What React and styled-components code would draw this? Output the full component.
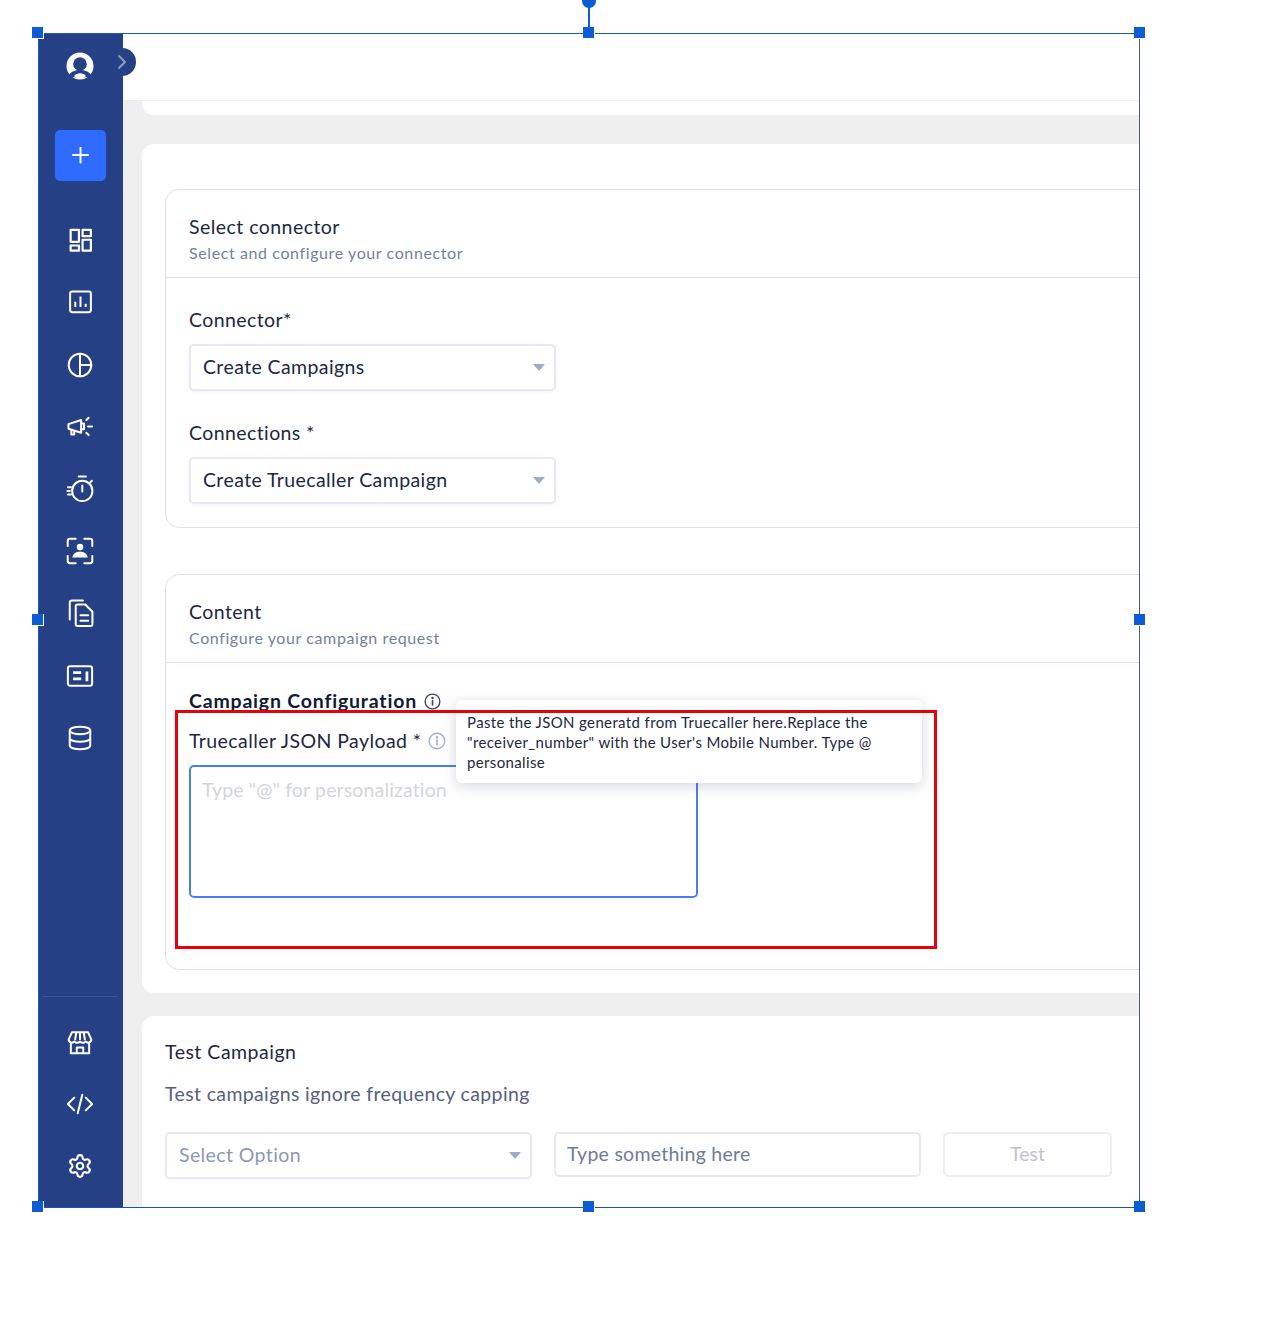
import React from "react";
import styled, { createGlobalStyle } from "styled-components";
import { Settings } from "lucide-react";

const Global = createGlobalStyle`
  html, body { margin: 0; padding: 0; background: #fff; }
  body { font-family: "Lato", "Liberation Sans", sans-serif; color: #1d2742; }
  * { box-sizing: border-box; }
`;
const Page = styled.div`
  position: relative; width: 1278px; height: 1332px; padding: 33px 0 0 38px; overflow: hidden; background: #fff;
`;
const Frame = styled.div`
  display: flex; width: 1101px; height: 1174px; overflow: hidden; background: #efefef;
`;
const Sidebar = styled.aside`
  flex: 0 0 85px; display: flex; flex-direction: column; align-items: center; background: #254085; padding-top: 19px;
`;
const Avatar = styled.div`width: 28px; height: 28px; margin-right: 2px; line-height: 0;`;
const AddButton = styled.div`
  width: 51px; height: 51px; margin-top: 50px; border-radius: 5px; background: #2f6bff;
  display: flex; align-items: center; justify-content: center; color: #fff;
`;
const NavGroup = styled.nav`
  display: flex; flex-direction: column; gap: ${p => p.$gap}px; margin-top: ${p => p.$top}px;
`;
const NavIcon = styled.div`
  width: 40px; height: 40px; margin-right: 1px; display: flex; align-items: center; justify-content: center; color: #fff;
`;
const SideRule = styled.div`width: 75px; height: 1px; margin-top: auto; background: #3d558f;`;
const SideFoot = styled.div`height: 21px; flex: none;`;
const Toggle = styled.div`
  position: absolute; left: 108px; top: 48px; width: 28px; height: 28px; border-radius: 50%;
  background: #254085; display: flex; align-items: center; justify-content: center;
  color: #8d9bbd;
`;
const Main = styled.main`flex: 1; min-width: 0; display: flex; flex-direction: column;`;
const TopBar = styled.header`height: 68px; flex: none; background: #fff; border-bottom: 1px solid #e8ecf8;`;
const Stack = styled.div`flex: 1; min-height: 0; padding-left: 19px; display: flex; flex-direction: column;`;
const CardTail = styled.div`height: 14px; flex: none; width: 1100px; background: #fff; border-radius: 0 0 0 12px;`;
const Card = styled.section`
  flex: ${p => p.$grow ? "1" : "none"}; width: 1100px; background: #fff;
  border-radius: ${p => p.$grow ? "12px 0 0 0" : "12px 0 0 12px"};
  margin-top: ${p => p.$top}px; padding: ${p => p.$pad};
`;
const Panel = styled.div`
  width: 1100px; border: 1px solid #dce1f0; border-radius: 14px; margin-top: ${p => p.$top || 0}px;
`;
const PanelHead = styled.div`height: 88px; padding: 24px 23px 0; border-bottom: 1px solid #dce1f0;`;
const PanelTitle = styled.div`font-size: 19.5px; line-height: 26px; color: #1d2742; letter-spacing: .45px;`;
const PanelSub = styled.div`font-size: 16px; line-height: 24px; color: #74809f; margin-top: 1px; letter-spacing: .6px;`;
const PanelBody = styled.div`padding: ${p => p.$pad};`;
const FieldLabel = styled.div`font-size: 19.5px; line-height: 26px; color: #1d2742; letter-spacing: .4px; margin-top: ${p => p.$top || 0}px;`;
const SelectBox = styled.div`
  width: ${p => p.$w}px; height: 47px; margin-top: ${p => p.$top || 0}px; padding: 0 9px 2px 12px;
  border: 2px solid #e6e9f5; border-radius: 5px; background: #fff;
  box-shadow: 0 1px 3px rgba(30,50,110,.06);
  display: flex; align-items: center; justify-content: space-between;
  font-size: 19.5px; letter-spacing: .4px; color: ${p => p.$muted ? "#8c97b5" : "#1d2742"};
`;
const Caret = styled.span`
  width: 0; height: 0; border-left: 6.5px solid transparent; border-right: 6.5px solid transparent;
  border-top: 7px solid #9eaac8; margin-top: 2px;
`;
const SectionTitle = styled.div`
  display: flex; align-items: center; gap: 7px; font-size: 19.5px; line-height: 26px; font-weight: 700;
  letter-spacing: .8px; color: #111a33;
`;
const FieldRow = styled.div`
  display: flex; align-items: center; gap: 6px; margin-top: 14px;
  font-size: 19.5px; line-height: 26px; letter-spacing: .42px; color: #1d2742;
`;
const InfoIcon = styled.span`display: flex; color: ${p => p.$c};`;
const TextArea = styled.div`
  width: 509px; height: 133px; margin-top: 11px; border: 2px solid #4a7df5; border-radius: 5px;
  padding: 10px 11px; font-size: 19.5px; line-height: 26px; letter-spacing: .15px; color: #d3d5da;
`;
const TestTitle = styled.div`font-size: 19.5px; line-height: 26px; letter-spacing: .5px; color: #1d2742;`;
const TestSub = styled.div`font-size: 19.5px; line-height: 26px; letter-spacing: .36px; color: #56607c; margin-top: 16px;`;
const TestRow = styled.div`display: flex; align-items: flex-start; gap: 22px; margin-top: 25px;`;
const InputBox = styled.div`
  width: 367px; height: 45px; border: 2px solid #e6e9f5; border-radius: 5px; padding: 0 11px 2px;
  display: flex; align-items: center; font-size: 19.5px; letter-spacing: .26px; color: #6f7a98;
`;
const TestButton = styled.div`
  width: 169px; height: 45px; border: 2px solid #eceef3; border-radius: 5px; padding-bottom: 2px;
  display: flex; align-items: center; justify-content: center; font-size: 19.5px; color: #c0c3ca;
`;
const Tooltip = styled.div`
  position: absolute; left: 456px; top: 700px; width: 466px; height: 83px; padding: 12px 11px;
  background: #fff; border-radius: 6px; box-shadow: 0 3px 14px rgba(40,50,90,.2);
  font-size: 15px; line-height: 20px; letter-spacing: .36px; color: #1d2742;
`;
const RedBox = styled.div`
  position: absolute; left: 175px; top: 710px; width: 762px; height: 239px; border: 3px solid #e8000b;
`;
const FrameLine = styled.div`
  position: absolute; left: 38px; top: 33px; width: 1102px; height: 1175px; pointer-events: none;
  border: 1px solid #1557bd; border-right-color: #4a5a80;
`;
const Handle = styled.div`
  position: absolute; left: ${p => p.$x - 6}px; top: ${p => p.$y - 6}px; width: 12px; height: 12px;
  background: #0b5cd5; border-right: 1px solid #fff; border-bottom: 1px solid #fff;
`;
const Stem = styled.div`position: absolute; left: 588px; top: 2px; width: 2px; height: 31px; background: #0b5cd5;`;
const Knob = styled.div`
  position: absolute; left: 582px; top: -6px; width: 14px; height: 14px; border-radius: 50%; background: #0b5cd5;
`;

const S = ({ children, size = 26, sw = 2 }) => (
  <svg width={size} height={size} viewBox="0 0 26 26" fill="none" stroke="currentColor" strokeWidth={sw * 26 / size}
    strokeLinecap="round" strokeLinejoin="round">{children}</svg>
);
const icons = [
  <S sw={2.2} size={27}><g transform="translate(0 -.7)"><rect x="3.500" y="3.500" width="8" height="11.500" /><rect x="15" y="3.500" width="8" height="6" /><rect x="3.500" y="18.500" width="8" height="5" /><rect x="15" y="13" width="8" height="10.500" /></g></S>,
  <S size={27}><g transform="translate(0 -.7)"><rect x="3" y="3" width="20" height="20" rx="2" /><path d="M8 18v-5M13 18V8M18 18v-3" strokeLinecap="butt" /></g></S>,
  <S size={28}><circle cx="13" cy="13" r="10.500" /><path d="M13 2.500v21M13 13h10.500" /></S>,
  <S size={30}><path d="M3 10.500l11-3.500v11L3 14.500z" /><path d="M5.500 15.500v4h2.500v-3.300" /><path d="M14 10h2.500v5H14" /><path d="M18.500 7l2-2M20 12.500h3.500M18.500 18l2 2" /></S>,
  <S size={31}><g transform="translate(0 -.8)"><circle cx="14.500" cy="15" r="8.500" /><path d="M11.500 3h6M14.500 10.500v5M21 8l1.500-1.500M2.500 12h2.500M2 15h2M2.500 18h2.500" /></g></S>,
  <S size={32}><path d="M3 9V5a2 2 0 0 1 2-2h4.500M16.500 3H21a2 2 0 0 1 2 2v4M23 17v4a2 2 0 0 1-2 2h-4.500M9.500 23H5a2 2 0 0 1-2-2v-4" /><circle cx="13" cy="9.800" r="2.700" fill="currentColor" stroke="none" /><path d="M6.800 18.300c.5-3.200 2.800-4.600 6.200-4.600s5.700 1.400 6.200 4.600z" fill="currentColor" stroke="none" /></S>,
  <S size={31}><path d="M4 18V4a2 2 0 0 1 2-2h9" /><path d="M9 7a1.500 1.500 0 0 1 1.500-1.500h6.500l6 6v10.500a1.500 1.500 0 0 1-1.500 1.500h-11a1.500 1.500 0 0 1-1.500-1.500z" /><path d="M13 14.500h6.500M13 19h6.500" /></S>,
  <S size={30}><rect x="2.500" y="4.500" width="21" height="17" rx="2" /><path d="M7 10h7M7 15.500h7M19 9v8.500" strokeWidth="2.400" strokeLinecap="butt" /></S>,
  <S size={28}><ellipse cx="13" cy="6" rx="9.500" ry="3.500" /><path d="M3.500 6v14c0 2 4.300 3.500 9.500 3.500s9.500-1.500 9.500-3.500V6M3.500 13c0 2 4.300 3.500 9.500 3.500s9.500-1.500 9.500-3.500" /></S>,
];
const bottomIcons = [
  <S size={28}><g transform="translate(0 1)"><path d="M5.500 3h15l3 6.500a3 3 0 0 1-5.300 2 3.500 3.500 0 0 1-5.200 0 3.500 3.500 0 0 1-5.200 0 3 3 0 0 1-5.300-2z" /><path d="M4.500 13v9.500h17V13M10 22.500V17h6v5.500M9.500 3.500L8.500 9.500M13 3.500v6M16.500 3.500l1 6" /></g></S>,
  <S size={30}><path d="M8 7.500L2.500 13 8 18.500M18 7.500l5.500 5.500-5.500 5.500M15 5l-4 16" /></S>,
  <Settings size={26} strokeWidth={2} />,
];
const Info = ({ size }) => (
  <svg width={size} height={size} viewBox="0 0 18 18" fill="none" stroke="currentColor" strokeWidth="1.400" strokeLinecap="round">
    <circle cx="9" cy="9" r="7.800" /><path d="M9 8.200v4.500" strokeWidth="1.700" /><circle cx="9" cy="5.400" r=".6" />
  </svg>
);

export default function App() {
  const handles = [[38, 33], [589, 33], [1140, 33], [38, 620], [1140, 620], [38, 1207], [589, 1207], [1140, 1207]];
  return (
    <Page>
      <Global />
      <Frame>
        <Sidebar>
          <Avatar>
            <svg width="28" height="28" viewBox="0 0 28 28">
              <circle cx="14" cy="14" r="13.500" fill="#fff" />
              <circle cx="14" cy="12" r="6.800" fill="#254085" />
              <path d="M3 23c2-3.500 6-5 11-5s9 1.500 11 5l-3 2.300H6z" fill="#254085" />
              <path d="M8 24c1.500-2 3.500-2.800 6-2.800s4.500.8 6 2.800c-1.800 1.800-3.800 3-6 3s-4.200-1.200-6-3z" fill="#fff" />
            </svg>
          </Avatar>
          <AddButton>
            <svg width="18" height="18" viewBox="0 0 18 18" stroke="currentColor" strokeWidth="2" strokeLinecap="round"><path d="M8.500 .5v15M1 8h15" /></svg>
          </AddButton>
          <NavGroup $top={39} $gap={22.25}>{icons.map((ic, i) => <NavIcon key={i}>{ic}</NavIcon>)}</NavGroup>
          <SideRule />
          <NavGroup $top={25} $gap={22}>{bottomIcons.map((ic, i) => <NavIcon key={i}>{ic}</NavIcon>)}</NavGroup>
          <SideFoot />
        </Sidebar>
        <Main>
          <TopBar />
          <Stack>
            <CardTail />
            <Card $top={29} $pad="45px 0 23px 23px">
              <Panel>
                <PanelHead>
                  <PanelTitle>Select connector</PanelTitle>
                  <PanelSub>Select and configure your connector</PanelSub>
                </PanelHead>
                <PanelBody $pad="29px 23px 23px">
                  <FieldLabel>Connector*</FieldLabel>
                  <SelectBox $w={367} $top={11}>Create Campaigns<Caret /></SelectBox>
                  <FieldLabel $top={29}>Connections *</FieldLabel>
                  <SelectBox $w={367} $top={11}>Create Truecaller Campaign<Caret /></SelectBox>
                </PanelBody>
              </Panel>
              <Panel $top={46}>
                <PanelHead>
                  <PanelTitle>Content</PanelTitle>
                  <PanelSub>Configure your campaign request</PanelSub>
                </PanelHead>
                <PanelBody $pad="25px 23px 71px">
                  <SectionTitle>Campaign Configuration<InfoIcon $c="#3c4560"><Info size={17} /></InfoIcon></SectionTitle>
                  <FieldRow>Truecaller JSON Payload *<InfoIcon $c="#9fb2d8"><Info size={18} /></InfoIcon></FieldRow>
                  <TextArea>Type "@" for personalization</TextArea>
                </PanelBody>
              </Panel>
            </Card>
            <Card $grow $top={23} $pad="23px 0 0 23px">
              <TestTitle>Test Campaign</TestTitle>
              <TestSub>Test campaigns ignore frequency capping</TestSub>
              <TestRow>
                <SelectBox $w={367} $muted>Select Option<Caret /></SelectBox>
                <InputBox>Type something here</InputBox>
                <TestButton>Test</TestButton>
              </TestRow>
            </Card>
          </Stack>
        </Main>
      </Frame>
      <Toggle>
        <svg width="12" height="16" viewBox="0 0 12 16" fill="none" stroke="currentColor" strokeWidth="2" strokeLinecap="round" strokeLinejoin="round"><path d="M3 2l6 6-6 6" /></svg>
      </Toggle>
      <Tooltip>
        Paste the JSON generatd from Truecaller here.Replace the<br />
        "receiver_number" with the User's Mobile Number. Type @<br />
        personalise
      </Tooltip>
      <RedBox />
      <FrameLine />
      <Stem />
      <Knob />
      {handles.map(([x, y]) => <Handle key={x + "-" + y} $x={x} $y={y} />)}
    </Page>
  );
}
